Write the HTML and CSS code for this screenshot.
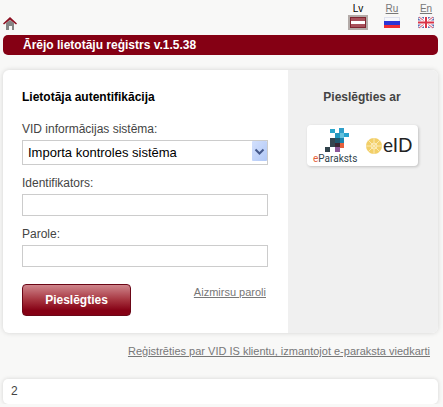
FILE: index.html
```html
<!DOCTYPE html>
<html lang="lv">
<head>
  <meta charset="UTF-8">
  <meta name="viewport" content="width=device-width, initial-scale=1.0">
  <title>Ārējo lietotāju reģistrs</title>
  <link rel="stylesheet" href="styles.css">
</head>
<body>
  <!-- Home link and languages -->
  <header class="top">
    <a class="home" href="#" aria-label="Sākums">
      <svg width="14" height="13" viewBox="0 0 14 13">
        <path d="M3 6 7 3l4 3v7H9V9H6v4H3z" fill="#858585"/>
        <path d="M0 6.500 7 0l7 6.500-1 1L7 2.800 1 7.500z" fill="#8c1022"/>
      </svg>
    </a>
    <nav class="languages">
      <a class="language active" href="#">
        <span>Lv</span>
        <svg width="20" height="15" viewBox="0 0 20 15">
          <rect x="2" y="2" width="16" height="11" fill="#7e2530"/>
          <rect x="3" y="3" width="14" height="9" fill="#a8505a"/>
          <rect x="3" y="6" width="14" height="3" fill="#fff"/>
        </svg>
      </a>
      <a class="language" href="#">
        <span>Ru</span>
        <svg width="20" height="15" viewBox="0 0 20 15">
          <rect x="2" y="2" width="16" height="4" fill="#dfe2ef"/>
          <rect x="3" y="3" width="14" height="3" fill="#f6f7fb"/>
          <rect x="2" y="6" width="16" height="4" fill="#2b35d6"/>
          <rect x="2" y="10" width="16" height="3" fill="#ee2d35"/>
        </svg>
      </a>
      <a class="language" href="#">
        <span>En</span>
        <svg width="20" height="15" viewBox="0 0 20 15">
          <rect x="2" y="2" width="16" height="11" fill="#5c6aae"/>
          <path d="M3 2l14 11M17 2 3 13" stroke="#f4eef4" stroke-width="3"/>
          <path d="M3 2l14 11M17 2 3 13" stroke="#d9566a"/>
          <path d="M10 2v11M2 7.500h16" stroke="#fff" stroke-width="4"/>
          <path d="M10 2v11M2 7.500h16" stroke="#d93347" stroke-width="2"/>
        </svg>
      </a>
    </nav>
  </header>

  <h1 class="banner">Ārējo lietotāju reģistrs v.1.5.38</h1>

  <!-- Login card -->
  <main class="card">
    <form class="login">
      <h2>Lietotāja autentifikācija</h2>

      <div class="field">
        <label for="system">VID informācijas sistēma:</label>
        <div class="select-box">
          <select class="input" id="system">
            <option>Importa kontroles sistēma</option>
          </select>
          <svg class="arrow" width="15" height="20" viewBox="0 0 15 20">
            <defs>
              <linearGradient id="arrowFill" x1="0" y1="0" x2="1" y2="1">
                <stop offset="0" stop-color="#d3e0fd"/>
                <stop offset="1" stop-color="#b1c8f6"/>
              </linearGradient>
            </defs>
            <rect width="15" height="20" rx="1" fill="url(#arrowFill)"/>
            <path d="M3.500 8.500l4 4 4-4" fill="none" stroke="#45598c" stroke-width="2"/>
          </svg>
        </div>
      </div>

      <div class="field">
        <label for="username">Identifikators:</label>
        <input type="text" class="input" id="username">
      </div>

      <div class="field">
        <label for="password">Parole:</label>
        <input type="password" class="input" id="password">
      </div>

      <div class="actions">
        <button type="submit" class="button">Pieslēgties</button>
        <a class="link" href="#">Aizmirsu paroli</a>
      </div>
    </form>

    <aside class="other-login">
      <h2>Pieslēgties ar</h2>
      <a class="eid" href="#">
        <svg width="111" height="41" viewBox="0 0 111 41">
          <rect x="23" y="4" width="5" height="4" fill="#2ba6cb"/>
          <rect x="32" y="3" width="5" height="5" fill="#2f9fc9"/>
          <rect x="28" y="8" width="5" height="5" fill="#2497bd"/>
          <rect x="33" y="8" width="4" height="5" fill="#63c2de"/>
          <rect x="37" y="8" width="5" height="4" fill="#26a3ce"/>
          <rect x="23" y="13" width="5" height="9" fill="#34454e"/>
          <rect x="28" y="13" width="5" height="5" fill="#20566c"/>
          <rect x="33" y="13" width="4" height="5" fill="#1784af"/>
          <rect x="28" y="18" width="5" height="4" fill="#3c2530"/>
          <rect x="33" y="18" width="4" height="5" fill="#e4613e"/>
          <rect x="18" y="22" width="5" height="5" fill="#31434c"/>
          <rect x="28" y="22" width="5" height="5" fill="#8c5797"/>
          <text class="eparaksts-name" x="6" y="37"><tspan fill="#e4603b">e</tspan>Paraksts</text>
          <circle cx="67" cy="21" r="8" fill="#f2cf68"/>
          <g fill="none" stroke="#fbe9b4">
            <circle cx="67" cy="21" r="3"/>
            <path d="M67 13v16M59 21h16M61 15l12 12M73 15 61 27"/>
          </g>
          <text class="eid-name" x="76" y="27">eID</text>
        </svg>
      </a>
    </aside>
  </main>

  <p class="register"><a class="link" href="#">Reģistrēties par VID IS klientu, izmantojot e-paraksta viedkarti</a></p>

  <footer class="footer">2</footer>
</body>
</html>
```

FILE: styles.css
```css
/* General Styles */
* {
  margin: 0;
  padding: 0;
  box-sizing: border-box;
}

body {
  font-family: "Liberation Sans", Arial, sans-serif;
  font-size: 12px;
  line-height: 14px;
  color: #444;
  background-color: #f8f8f7;
  padding: 2px 5px 0 3px;
}

svg {
  display: block;
}

a {
  color: #777;
}

/* Header */
.top {
  display: flex;
  justify-content: space-between;
  align-items: flex-end;
  height: 28px;
}

.languages {
  display: flex;
  gap: 14px;
  padding-right: 2px;
}

.language {
  display: flex;
  flex-direction: column;
  align-items: center;
  font-size: 10px;
  line-height: 13px;
}

.language.active {
  color: #000;
  text-decoration: none;
}

.language.active svg {
  background: #b3aba8;
}

.banner {
  margin-top: 5px;
  padding-left: 20px;
  border-radius: 5px;
  background: #850014;
  color: #fff;
  font-size: 12px;
  line-height: 20px;
}

/* Login card */
.card {
  display: flex;
  margin-top: 15px;
  border-radius: 6px;
  background: #fff;
  box-shadow: 0 0 5px rgba(0, 0, 0, 0.15);
  overflow: hidden;
}

.login {
  flex: 1;
  padding: 20px 20px 17px 19px;
}

h2 {
  font-size: 12px;
  line-height: 14px;
  color: #000;
}

.login h2 {
  margin-bottom: 18px;
}

.field {
  margin-bottom: 11px;
}

.field label {
  display: block;
  margin-bottom: 4px;
}

.input {
  display: block;
  width: 100%;
  height: 22px;
  padding: 0 5px;
  border: 1px solid #ccc;
  background: #fff;
  font-family: inherit;
  font-size: 13px;
  color: #000;
}

.select-box {
  position: relative;
}

.select-box .input {
  height: 25px;
  appearance: none;
}

.arrow {
  position: absolute;
  top: 1px;
  right: 1px;
  pointer-events: none;
}

.actions {
  display: flex;
  justify-content: space-between;
  align-items: flex-start;
  margin-top: 17px;
}

.button {
  width: 109px;
  height: 32px;
  border: 1px solid #6b0717;
  border-radius: 4px;
  background: linear-gradient(#cf868c, #a6343f 50%, #850014 85%);
  color: #fff;
  font-family: inherit;
  font-size: 12px;
  font-weight: bold;
  cursor: pointer;
}

.actions .link {
  padding: 1px 2px 0 0;
}

.link {
  font-size: 11px;
}

.other-login {
  display: flex;
  flex-direction: column;
  align-items: center;
  gap: 21px;
  width: 150px;
  padding: 20px 2px 0 0;
  background: #f0f0f0;
}

.other-login h2 {
  color: #444;
}

.eid {
  border-radius: 4px;
  background: #fff;
  box-shadow: 1px 1px 3px rgba(0, 0, 0, 0.2);
}

.eparaksts-name {
  font-family: Roboto, sans-serif;
  font-size: 10px;
  fill: #31434c;
}

.eid-name {
  font-family: Lato, sans-serif;
  font-size: 19px;
  fill: #222;
}

.register {
  margin-top: 11px;
  padding-right: 8px;
  text-align: right;
}

/* Footer */
.footer {
  margin-top: 21px;
  padding: 5px 8px 6px;
  border-radius: 5px;
  background: #fff;
  box-shadow: 0 0 4px rgba(0, 0, 0, 0.15);
}
```
